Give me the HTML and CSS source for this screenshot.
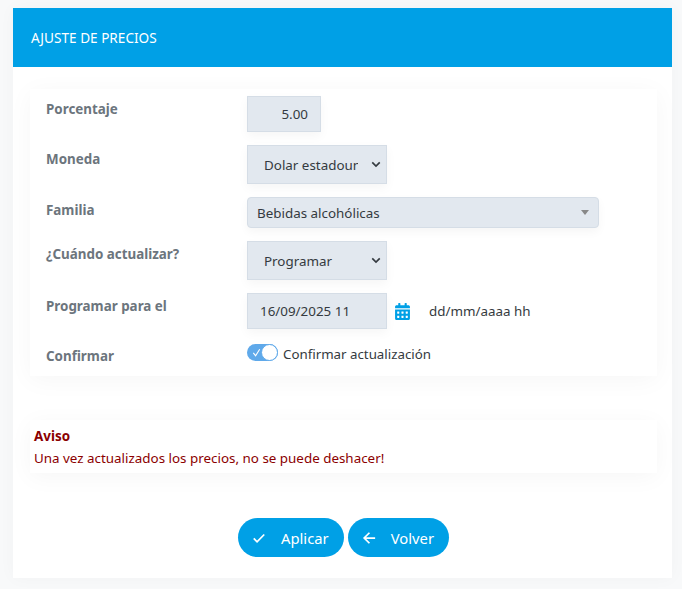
FILE: index.html
```html
<!DOCTYPE html>
<html lang="es">
<head>
    <meta charset="UTF-8">
    <meta name="viewport" content="width=device-width, initial-scale=1.0">
    <title>Ajuste de precios</title>
    <link rel="stylesheet" href="styles.css">
</head>
<body>
    <div class="card">
        <div class="card-header">AJUSTE DE PRECIOS</div>

        <div class="card-body">
            <form class="panel form-panel">
                <div class="form-row">
                    <label class="form-label">Porcentaje</label>
                    <input class="field field-number" type="text" value="5.00">
                </div>
                <div class="form-row">
                    <label class="form-label label-low">Moneda</label>
                    <select class="field field-select">
                        <option>Dolar estadounidense</option>
                    </select>
                </div>
                <div class="form-row">
                    <label class="form-label">Familia</label>
                    <div class="combo">
                        <span>Bebidas alcohólicas</span>
                        <span class="combo-arrow"></span>
                    </div>
                </div>
                <div class="form-row">
                    <label class="form-label">¿Cuándo actualizar?</label>
                    <select class="field field-select">
                        <option>Programar</option>
                    </select>
                </div>
                <div class="form-row">
                    <label class="form-label">Programar para el</label>
                    <input class="field field-date" type="text" value="16/09/2025 11">
                    <svg class="icon-calendar" viewBox="0 0 448 512" aria-hidden="true">
                        <path d="M0 464c0 26.5 21.5 48 48 48h352c26.5 0 48-21.5 48-48V192H0v272zm320-196c0-6.6 5.4-12 12-12h40c6.6 0 12 5.4 12 12v40c0 6.6-5.4 12-12 12h-40c-6.6 0-12-5.4-12-12v-40zm0 128c0-6.6 5.4-12 12-12h40c6.6 0 12 5.4 12 12v40c0 6.6-5.4 12-12 12h-40c-6.6 0-12-5.4-12-12v-40zM192 268c0-6.6 5.4-12 12-12h40c6.6 0 12 5.4 12 12v40c0 6.6-5.4 12-12 12h-40c-6.6 0-12-5.4-12-12v-40zm0 128c0-6.6 5.4-12 12-12h40c6.6 0 12 5.4 12 12v40c0 6.6-5.4 12-12 12h-40c-6.6 0-12-5.4-12-12v-40zM64 268c0-6.6 5.4-12 12-12h40c6.6 0 12 5.4 12 12v40c0 6.6-5.4 12-12 12H76c-6.6 0-12-5.4-12-12v-40zm0 128c0-6.6 5.4-12 12-12h40c6.6 0 12 5.4 12 12v40c0 6.6-5.4 12-12 12H76c-6.6 0-12-5.4-12-12v-40zM400 64h-48V16c0-8.8-7.2-16-16-16h-32c-8.8 0-16 7.2-16 16v48H160V16c0-8.8-7.2-16-16-16h-32c-8.8 0-16 7.2-16 16v48H48C21.5 64 0 85.5 0 112v48h448v-48c0-26.5-21.5-48-48-48z"/>
                    </svg>
                    <span class="date-hint">dd/mm/aaaa hh</span>
                </div>
                <div class="form-row row-last">
                    <label class="form-label label-confirm">Confirmar</label>
                    <div class="switch">
                        <svg class="switch-check" viewBox="0 0 12 12" aria-hidden="true">
                            <path d="M2.5 6.5l2.5 3 4.5-7"/>
                        </svg>
                        <span class="switch-knob"></span>
                    </div>
                    <span class="switch-text">Confirmar actualización</span>
                </div>
            </form>

            <div class="panel notice">
                <strong>Aviso</strong>
                <p>Una vez actualizados los precios, no se puede deshacer!</p>
            </div>

            <div class="actions">
                <button class="btn" type="button">
                    <svg class="btn-icon" viewBox="0 0 16 16" aria-hidden="true">
                        <path d="M2 8.5l3.8 3.8L14 4"/>
                    </svg>
                    Aplicar
                </button>
                <button class="btn" type="button">
                    <svg class="btn-icon" viewBox="0 0 16 16" aria-hidden="true">
                        <path d="M15 8H2.5M8.5 2L2.5 8l6 6"/>
                    </svg>
                    Volver
                </button>
            </div>
        </div>
    </div>
</body>
</html>
```

FILE: styles.css
```css
/* Global Styling */
body {
    font-family: 'Noto Sans', 'Open Sans', sans-serif;
    font-size: 13.4px;
    margin: 0;
    padding: 8px 10px 11px 13px;
    background: #f8f9fa;
    color: #343a40;
}

.card {
    background: #ffffff;
    box-shadow: 0 0 16px rgba(0, 0, 0, 0.03);
}

.card-header {
    height: 59px;
    line-height: 60px;
    padding-left: 18px;
    background: #00a0e6;
    color: #ffffff;
    font-size: 13.6px;
}

.card-body {
    padding: 22px 15px 21px 17px;
}

.panel {
    background: #ffffff;
    box-shadow: 0 4px 24px rgba(0, 0, 0, 0.04);
}

/* Form */
.form-panel {
    padding: 7px 16px 6px;
    height: 274px;
}

.form-row {
    display: flex;
    align-items: flex-start;
    margin-bottom: 13px;
}

.row-last {
    margin-bottom: 0;
    margin-top: 15px;
}

.form-label {
    width: 201px;
    flex: none;
    padding-top: 4px;
    line-height: 18px;
    font-weight: 700;
    color: #6c757d;
}

.label-low {
    padding-top: 5px;
}

.field {
    box-sizing: border-box;
    display: block;
    border: 1px solid #d5dde6;
    border-radius: 0;
    background-color: #e2e8ef;
    color: #343a40;
    font-family: inherit;
    font-size: 13.4px;
    box-shadow: 0 4px 10px rgba(0, 0, 0, 0.04);
    outline: none;
}

.field-number {
    width: 74px;
    height: 36px;
    padding: 0 12px 0 0;
    text-align: right;
}

.field-select {
    width: 140px;
    height: 39px;
    padding: 0 28px 0 16px;
    appearance: none;
    background-image: url("data:image/svg+xml,%3Csvg xmlns='http://www.w3.org/2000/svg' viewBox='0 0 12 8'%3E%3Cpath d='M1.5 1.5L6 6l4.5-4.5' fill='none' stroke='%23343a40' stroke-width='2'/%3E%3C/svg%3E");
    background-repeat: no-repeat;
    background-position: right 5px center;
    background-size: 10px 7px;
}

.field-date {
    width: 140px;
    height: 36px;
    padding: 0 12px;
}

.combo {
    box-sizing: border-box;
    display: flex;
    align-items: center;
    justify-content: space-between;
    width: 352px;
    height: 31px;
    padding: 0 9px;
    border: 1px solid #d5dde6;
    border-radius: 4px;
    background: #e2e8ef;
    box-shadow: 0 4px 10px rgba(0, 0, 0, 0.04);
}

.combo-arrow {
    border-left: 4px solid transparent;
    border-right: 4px solid transparent;
    border-top: 5px solid #888888;
}

.icon-calendar {
    width: 15px;
    height: 17px;
    margin: 10px 0 0 8px;
    fill: #00a0e6;
}

.date-hint {
    margin: 9px 0 0 19px;
    line-height: 18px;
}

/* Toggle */
.switch {
    position: relative;
    box-sizing: border-box;
    width: 31px;
    height: 17px;
    border-radius: 9px;
    background: #5fa9ea;
}

.switch-check {
    position: absolute;
    left: 4px;
    top: 3px;
    width: 11px;
    height: 11px;
    fill: none;
    stroke: #ffffff;
    stroke-width: 1.2;
}

.switch-knob {
    position: absolute;
    right: 0;
    top: 0;
    box-sizing: border-box;
    width: 17px;
    height: 17px;
    border: 1px solid #5fa9ea;
    border-radius: 50%;
    background: #ffffff;
}

.switch-text {
    margin-left: 5px;
    line-height: 20px;
    font-size: 13.3px;
}

.label-confirm {
    padding-top: 3px;
}

/* Notice */
.notice {
    margin-top: 44px;
    padding: 5px 4px 7px;
    height: 41px;
    color: #8b0000;
    line-height: 22px;
}

.notice strong {
    display: block;
}

.notice p {
    margin: 0;
}

/* Buttons */
.actions {
    display: flex;
    justify-content: center;
    gap: 4px;
    margin-top: 45px;
}

.btn {
    display: flex;
    align-items: center;
    height: 39px;
    padding: 0 15px 0 14px;
    border: none;
    border-radius: 20px;
    background: #00a0e6;
    color: #ffffff;
    font-family: inherit;
    font-size: 14.8px;
    cursor: pointer;
}

.btn-icon {
    width: 14px;
    height: 14px;
    margin-right: 15px;
    fill: none;
    stroke: #ffffff;
    stroke-width: 2;
}
```
